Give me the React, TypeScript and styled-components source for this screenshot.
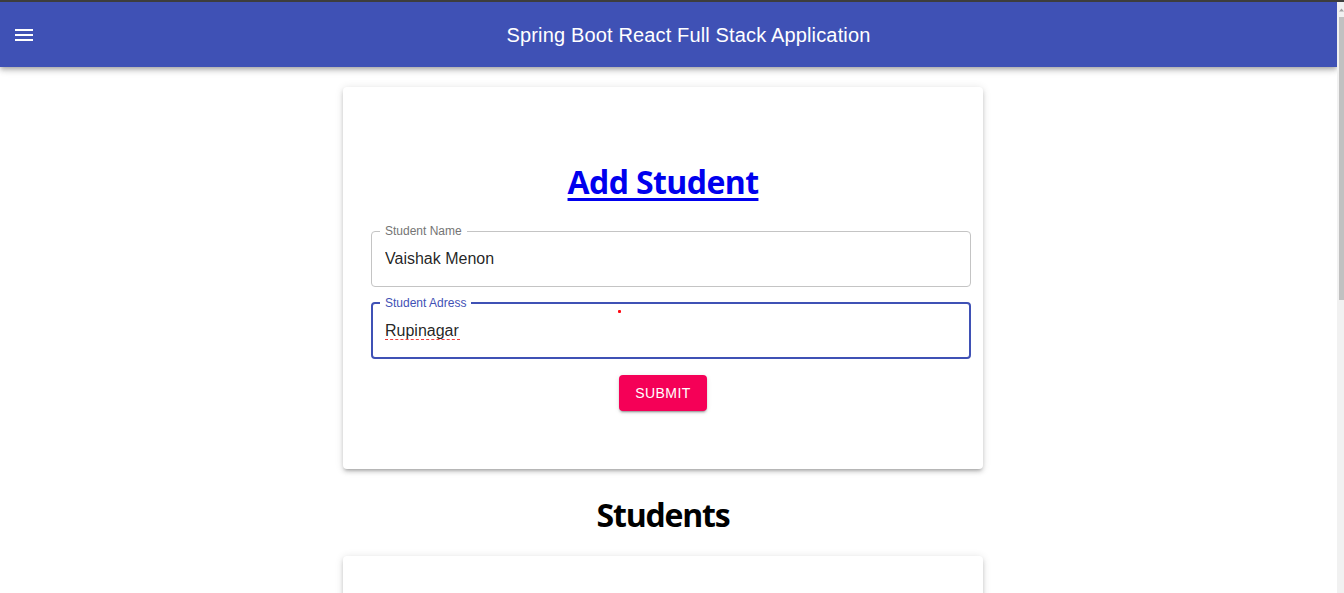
import React from "react";
import styled, { createGlobalStyle } from "styled-components";

const GlobalStyle = createGlobalStyle`
  html, body { margin: 0; padding: 0; background: #ffffff; }
  body { font-family: "Liberation Sans", Arial, sans-serif; overflow: hidden; }
  * { box-sizing: border-box; }
`;

const Window = styled.div`
  width: 1344px;
  height: 593px;
  display: flex;
  flex-direction: column;
  overflow: hidden;
`;

const TopStrip = styled.div`
  height: 2px;
  flex: none;
  background: #3d3d3d;
`;

const Body = styled.div`
  flex: 1;
  display: flex;
  min-height: 0;
`;

const Page = styled.div`
  flex: 1;
  display: flex;
  flex-direction: column;
  min-width: 0;
  overflow: hidden;
`;

const AppBar = styled.header`
  position: relative;
  z-index: 2;
  height: 65px;
  flex: none;
  display: flex;
  align-items: center;
  padding: 0 12px 0 12px;
  background: #3f51b5;
  color: #ffffff;
  box-shadow: 0px 2px 4px -1px rgba(0,0,0,0.2), 0px 4px 5px 0px rgba(0,0,0,0.14), 0px 1px 10px 0px rgba(0,0,0,0.12);
`;

const MenuButton = styled.button`
  width: 24px;
  height: 24px;
  padding: 0;
  margin: 0 16px 0 0;
  border: none;
  background: transparent;
  color: #ffffff;
  display: flex;
  align-items: center;
  justify-content: center;
`;

const AppTitle = styled.h6`
  flex: 1;
  margin: 0;
  text-align: center;
  font-family: "Liberation Sans", Arial, sans-serif;
  font-size: 20px;
  font-weight: 400;
  line-height: 24px;
  letter-spacing: 0.15px;
`;

const Content = styled.main`
  display: flex;
  flex-direction: column;
  align-items: center;
  padding: 20px 11px 0 0;
`;

const Card = styled.section<{ $pad?: string }>`
  width: 640px;
  flex: none;
  background: #ffffff;
  border-radius: 4px;
  padding: ${(p) => p.$pad ?? "0"};
  box-shadow: 0px 3px 3px -2px rgba(0,0,0,0.2), 0px 3px 4px 0px rgba(0,0,0,0.14), 0px 1px 8px 0px rgba(0,0,0,0.12);
`;

const FormCard = styled(Card)`
  display: flex;
  flex-direction: column;
  align-items: center;
`;

const Heading = styled.h1<{ $link?: boolean; $gap?: string; $tight?: string }>`
  margin: ${(p) => p.$gap ?? "0"};
  font-family: "Open Sans", "Noto Sans", sans-serif;
  font-size: 32px;
  font-weight: 700;
  line-height: 40px;
  text-align: center;
  color: ${(p) => (p.$link ? "#0000ee" : "#000000")};
  text-decoration: ${(p) => (p.$link ? "underline" : "none")};
  text-decoration-thickness: 3px;
  text-underline-offset: 4px;
  letter-spacing: ${(p) => p.$tight ?? "-0.6px"};
`;

const Form = styled.form`
  align-self: stretch;
  display: flex;
  flex-direction: column;
  align-items: center;
`;

const Field = styled.fieldset<{ $focused?: boolean; $gap?: string }>`
  position: relative;
  align-self: stretch;
  width: 100%;
  margin: ${(p) => p.$gap ?? "0"} 0 0 8px;
  padding: 0 ${(p) => (p.$focused ? "7px" : "8px")};
  border: ${(p) => (p.$focused ? "2px solid #3f51b5" : "1px solid #c4c4c4")};
  border-radius: 4px;
  min-width: 0;
`;

const Legend = styled.legend<{ $focused?: boolean }>`
  padding: 0 5px;
  font-family: "Liberation Sans", Arial, sans-serif;
  font-size: 12px;
  line-height: 14px;
  color: ${(p) => (p.$focused ? "#3f51b5" : "#757575")};
`;

const Input = styled.input<{ $focused?: boolean }>`
  display: block;
  width: 100%;
  height: 19px;
  box-sizing: content-box;
  margin: 0;
  padding: 11px 5px ${(p) => (p.$focused ? "17px" : "18px")};
  border: none;
  outline: none;
  background: transparent;
  font-family: "Liberation Sans", Arial, sans-serif;
  font-size: 16px;
  line-height: 19px;
  color: rgba(0,0,0,0.87);
`;

const Squiggle = styled.span`
  position: absolute;
  left: 12px;
  top: 29px;
  width: 75px;
  height: 0;
  border-bottom: 1px dashed #ef3b3b;
  pointer-events: none;
`;

const CursorDot = styled.span`
  position: absolute;
  left: 245px;
  top: 0px;
  width: 3px;
  height: 3px;
  border-radius: 1px;
  background: #ff0a14;
`;

const SubmitButton = styled.button`
  margin-top: 16px;
  height: 36px;
  padding: 0 16px;
  border: none;
  border-radius: 4px;
  background: #f50057;
  color: #ffffff;
  font-family: "Liberation Sans", Arial, sans-serif;
  font-size: 14px;
  font-weight: 400;
  letter-spacing: 0.4px;
  text-transform: uppercase;
  box-shadow: 0px 3px 1px -2px rgba(0,0,0,0.2), 0px 2px 2px 0px rgba(0,0,0,0.14), 0px 1px 5px 0px rgba(0,0,0,0.12);
`;

const ListCard = styled(Card)`
  height: 120px;
`;

const Scrollbar = styled.div`
  width: 7px;
  flex: none;
  display: flex;
  flex-direction: column;
  background: #f1f1f1;
`;

const ScrollArrow = styled.div`
  height: 15px;
  display: flex;
  align-items: center;
  justify-content: flex-end;
`;

const ScrollThumb = styled.div`
  height: 283px;
  margin-left: 2px;
  background: #c1c1c1;
`;

function MenuIcon() {
  return (
    <svg width="24" height="24" viewBox="0 0 24 24" fill="currentColor" aria-hidden="true">
      <path d="M3 18h18v-2H3v2zm0-5h18v-2H3v2zm0-7v2h18V6H3z" />
    </svg>
  );
}

export default function App() {
  return (
    <Window>
      <GlobalStyle />
      <TopStrip />
      <Body>
        <Page>
          <AppBar>
            <MenuButton aria-label="menu">
              <MenuIcon />
            </MenuButton>
            <AppTitle>Spring Boot React Full Stack Application</AppTitle>
          </AppBar>
          <Content>
            <FormCard $pad="75px 20px 58px">
              <Heading $link>Add Student</Heading>
              <Form onSubmit={(e) => e.preventDefault()}>
                <Field $gap="22px">
                  <Legend>Student Name</Legend>
                  <Input defaultValue="Vaishak Menon" spellCheck={false} />
                </Field>
                <Field $gap="9px" $focused>
                  <Legend $focused>Student Adress</Legend>
                  <Input defaultValue="Rupinagar" spellCheck={false} $focused />
                  <Squiggle />
                  <CursorDot />
                </Field>
                <SubmitButton type="submit">Submit</SubmitButton>
              </Form>
            </FormCard>
            <Heading $gap="26px 0 21px" $tight="-1.2px">Students</Heading>
            <ListCard />
          </Content>
        </Page>
        <Scrollbar>
          <ScrollArrow>
            <svg width="5" height="4" viewBox="0 0 5 4" aria-hidden="true">
              <path d="M2.5 0.5 L5 3.5 L0 3.5 Z" fill="#a3a3a3" />
            </svg>
          </ScrollArrow>
          <ScrollThumb />
        </Scrollbar>
      </Body>
    </Window>
  );
}
